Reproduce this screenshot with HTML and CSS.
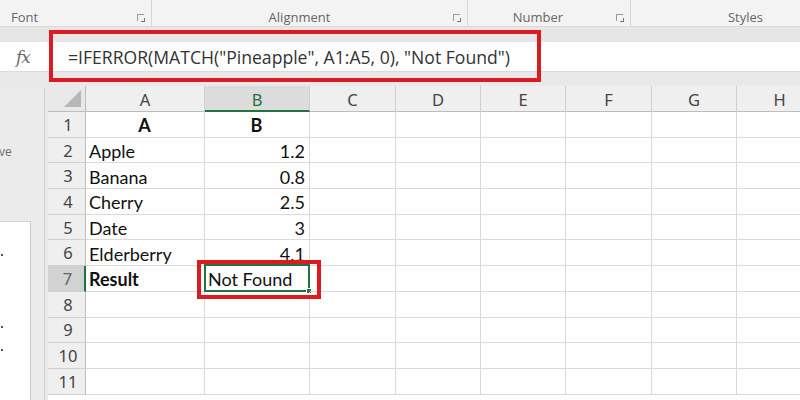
FILE: index.html
```html
<!DOCTYPE html>
<html>
<head>
<meta charset="utf-8">
<link rel="stylesheet" href="styles.css">
</head>
<body>
<div class="app">
  <div class="ribbon">
    <div class="group g-font"><span class="glabel">Font</span><span class="launcher"></span></div>
    <div class="group g-align"><span class="glabel">Alignment</span><span class="launcher"></span></div>
    <div class="group g-num"><span class="glabel">Number</span><span class="launcher"></span></div>
    <div class="group g-styles"><span class="glabel">Styles</span></div>
  </div>
  <div class="band"></div>
  <div class="fbar">
    <div class="fx">fx</div>
    <div class="ftext">=IFERROR(MATCH("Pineapple", A1:A5, 0), "Not Found")</div>
    <div class="redbox fbox"></div>
  </div>
  <div class="gap"></div>
  <div class="main">
    <div class="side">
      <div class="side-top"><span class="sidetxt">ve</span></div>
      <div class="side-box">
        <span class="dot d1"></span><span class="dot d2"></span><span class="dot d3"></span>
      </div>
    </div>
    <div class="sheet">
      <div class="grid">
        <div class="corner"><span class="tri"></span></div>
        <div class="ch">A</div><div class="ch sel">B</div><div class="ch">C</div><div class="ch">D</div><div class="ch">E</div><div class="ch">F</div><div class="ch">G</div><div class="ch">H</div>

        <div class="rh">1</div><div class="c b ctr">A</div><div class="c b ctr">B</div><div class="c"></div><div class="c"></div><div class="c"></div><div class="c"></div><div class="c"></div><div class="c"></div>
        <div class="rh">2</div><div class="c">Apple</div><div class="c num">1.2</div><div class="c"></div><div class="c"></div><div class="c"></div><div class="c"></div><div class="c"></div><div class="c"></div>
        <div class="rh">3</div><div class="c">Banana</div><div class="c num">0.8</div><div class="c"></div><div class="c"></div><div class="c"></div><div class="c"></div><div class="c"></div><div class="c"></div>
        <div class="rh">4</div><div class="c">Cherry</div><div class="c num">2.5</div><div class="c"></div><div class="c"></div><div class="c"></div><div class="c"></div><div class="c"></div><div class="c"></div>
        <div class="rh">5</div><div class="c">Date</div><div class="c num">3</div><div class="c"></div><div class="c"></div><div class="c"></div><div class="c"></div><div class="c"></div><div class="c"></div>
        <div class="rh">6</div><div class="c">Elderberry</div><div class="c num">4.1</div><div class="c"></div><div class="c"></div><div class="c"></div><div class="c"></div><div class="c"></div><div class="c"></div>
        <div class="rh sel">7</div><div class="c b">Result</div><div class="c active">Not Found<span class="handle"></span><span class="redbox cbox"></span></div><div class="c"></div><div class="c"></div><div class="c"></div><div class="c"></div><div class="c"></div><div class="c"></div>
        <div class="rh">8</div><div class="c"></div><div class="c"></div><div class="c"></div><div class="c"></div><div class="c"></div><div class="c"></div><div class="c"></div><div class="c"></div>
        <div class="rh">9</div><div class="c"></div><div class="c"></div><div class="c"></div><div class="c"></div><div class="c"></div><div class="c"></div><div class="c"></div><div class="c"></div>
        <div class="rh">10</div><div class="c"></div><div class="c"></div><div class="c"></div><div class="c"></div><div class="c"></div><div class="c"></div><div class="c"></div><div class="c"></div>
        <div class="rh">11</div><div class="c"></div><div class="c"></div><div class="c"></div><div class="c"></div><div class="c"></div><div class="c"></div><div class="c"></div><div class="c"></div>
      </div>
    </div>
  </div>
</div>
</body>
</html>
```

FILE: styles.css
```css
* { box-sizing: border-box; }
html, body { margin: 0; padding: 0; }
body { width: 800px; height: 400px; overflow: hidden; background: #e9e9e9; }
.app { width: 800px; height: 400px; display: flex; flex-direction: column; overflow: hidden; }

.ribbon { height: 27px; background: #f3f3f3; display: flex; border-bottom: 1px solid #dadada; flex: none; }
.group { position: relative; display: flex; align-items: center; height: 100%; border-right: 1px solid #d6d6d6; font-family: "Open Sans", "Noto Sans", sans-serif; font-size: 13px; color: #666; }
.g-font { width: 152px; padding-left: 11px; }
.g-align { width: 316px; justify-content: center; padding-right: 20px; }
.g-num { width: 163px; justify-content: center; padding-right: 22px; }
.g-styles { flex: 1; justify-content: center; border-right: none; padding-left: 60px; }
.glabel { padding-top: 7px; }
.launcher { position: absolute; right: 7px; top: 14px; width: 7px; height: 7px; border-left: 1px solid #9a9a9a; border-top: 1px solid #9a9a9a; }
.launcher::after { content: ""; position: absolute; right: -1px; bottom: -1px; width: 3px; height: 3px; border-right: 1px solid #777; border-bottom: 1px solid #777; }

.band { height: 15px; background: #e6e6e6; flex: none; }

.fbar { position: relative; height: 30px; background: #fff; display: flex; align-items: center; flex: none; border-bottom: 1px solid #dcdcdc; }
.fx { width: 48px; padding-left: 16px; font-family: "DejaVu Serif", "Liberation Serif", serif; font-style: italic; font-size: 17px; color: #6a6a6a; letter-spacing: -1px; }
.ftext { padding-left: 20px; font-family: "Open Sans", "Noto Sans", sans-serif; font-size: 17.6px; color: #333; white-space: nowrap; }

.redbox { position: absolute; border: 4px solid #dc1a20; pointer-events: none; }
.fbox { left: 49px; top: -12px; width: 492px; height: 52px; }

.gap { height: 14px; background: #e9e9e9; flex: none; }

.main { flex: 1; display: flex; min-height: 0; }
.side { width: 48px; flex: none; display: flex; flex-direction: column; border-right: 3px solid #e9e9e9; background: #ebebeb; position: relative; }
.side::after { content: ""; position: absolute; right: 0; top: 2px; bottom: 0; width: 1px; background: #d0d0d0; }
.side-top { height: 136px; border-bottom: 1px solid #d2d2d2; margin-right: 14px; position: relative; }
.sidetxt { position: absolute; left: -1px; top: 57px; font-family: "Open Sans", "Noto Sans", sans-serif; font-size: 12px; color: #6b6b6b; }
.side-box { flex: 1; width: 31px; background: #fff; border-right: 1px solid #c9c9c9; position: relative; }
.dot { position: absolute; left: 1px; width: 2px; height: 2px; background: #555; }
.d1 { top: 32px; }
.d2 { top: 104px; }
.d3 { top: 127px; }

.sheet { flex: 1; overflow: hidden; background: #fff; }
.grid { display: grid; grid-template-columns: 38px 119px 105px 86px 85px 85px 86px 85px 86px; grid-template-rows: 26px repeat(11, 25.7px); width: 775px; }

.corner { background: #e9e9e9; border-right: 1px solid #bdbdbd; border-bottom: 1px solid #bdbdbd; position: relative; }
.tri { position: absolute; right: 4px; bottom: 4px; width: 0; height: 0; border-left: 17px solid transparent; border-bottom: 17px solid #b7b7b7; }

.ch { background: #efefef; border-right: 1px solid #d0d0d0; border-bottom: 1px solid #bdbdbd; font-family: "Noto Sans", "Open Sans", sans-serif; font-size: 16.5px; color: #444; display: flex; align-items: center; justify-content: center; padding-top: 2px; }
.ch.sel { background: #dcdcdc; color: #217346; border-bottom: 2px solid #217346; }

.rh { background: #efefef; border-right: 1px solid #bdbdbd; border-bottom: 1px solid #d0d0d0; font-family: "Noto Sans", "Open Sans", sans-serif; font-size: 16.5px; color: #444; display: flex; align-items: center; justify-content: center; padding-left: 3px; }
.rh.sel { background: #d2d2d2; color: #5a6a60; border-right: 2px solid #217346; }

.c { border-right: 1px solid #dadada; border-bottom: 1px solid #dadada; font-family: "Lato", "Noto Sans", sans-serif; font-size: 18px; color: #111; display: flex; align-items: center; padding: 2px 4px 0 3px; white-space: nowrap; position: relative; }
.c.b { font-weight: bold; }
.c.ctr { justify-content: center; }
.c.num { justify-content: flex-end; }
.c.active::before { content: ""; position: absolute; left: -1px; top: -2px; right: -1px; bottom: -1px; border: 2px solid #217346; }
.handle { position: absolute; right: -3px; bottom: -3px; width: 6px; height: 6px; background: #217346; border: 1px solid #fff; }
.cbox { left: -8px; top: -6px; right: -12px; bottom: -8px; z-index: 2; }
```
